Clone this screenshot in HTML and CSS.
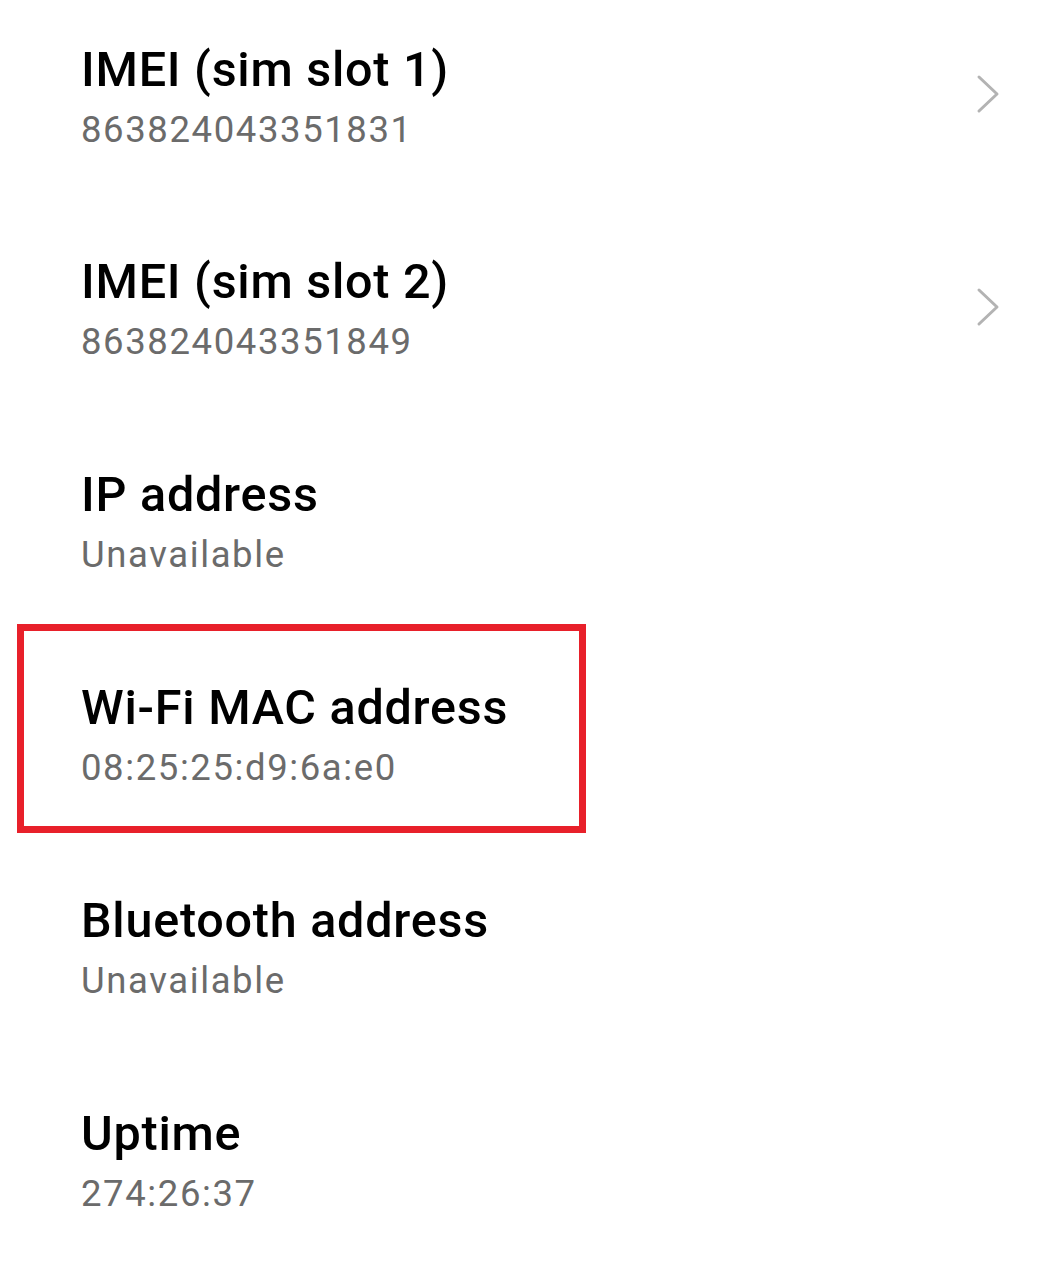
FILE: index.html
```html
<!DOCTYPE html>
<html lang="en">
<head>
<meta charset="utf-8">
<title>Device status</title>
<link rel="stylesheet" href="styles.css">
</head>
<body>
<div class="list">
  <div class="row">
    <div class="text">
      <div class="title">IMEI (sim slot 1)</div>
      <div class="value">863824043351831</div>
    </div>
    <svg class="chev" viewBox="0 0 24 40" width="24" height="40"><path d="M3 3 L21 20 L3 37" /></svg>
  </div>
  <div class="row">
    <div class="text">
      <div class="title">IMEI (sim slot 2)</div>
      <div class="value">863824043351849</div>
    </div>
    <svg class="chev" viewBox="0 0 24 40" width="24" height="40"><path d="M3 3 L21 20 L3 37" /></svg>
  </div>
  <div class="row">
    <div class="text">
      <div class="title">IP address</div>
      <div class="value">Unavailable</div>
    </div>
  </div>
  <div class="row highlighted">
    <div class="text">
      <div class="title">Wi-Fi MAC address</div>
      <div class="value">08:25:25:d9:6a:e0</div>
    </div>
    <div class="mark"></div>
  </div>
  <div class="row">
    <div class="text">
      <div class="title">Bluetooth address</div>
      <div class="value">Unavailable</div>
    </div>
  </div>
  <div class="row">
    <div class="text">
      <div class="title">Uptime</div>
      <div class="value">274:26:37</div>
    </div>
  </div>
</div>
</body>
</html>
```

FILE: styles.css
```css
html, body {
  margin: 0;
  padding: 0;
  background: #ffffff;
}
body {
  font-family: Roboto, "Noto Sans", "Liberation Sans", sans-serif;
  overflow: hidden;
}
.list {
  display: flex;
  flex-direction: column;
}
.row {
  position: relative;
  box-sizing: border-box;
  height: 212.8px;
  padding: 41.6px 60px 0 81px;
  display: flex;
  align-items: flex-start;
  justify-content: space-between;
}
.text {
  display: flex;
  flex-direction: column;
  gap: 10px;
}
.title {
  font-size: 48.5px;
  line-height: 56px;
  font-weight: 500;
  color: #000000;
  letter-spacing: 0.75px;
}
.value {
  font-size: 36.5px;
  line-height: 44px;
  font-weight: 400;
  color: #6b6b6b;
  letter-spacing: 1.6px;
}
.chev {
  margin-top: 32.4px;
}
.chev path {
  fill: none;
  stroke: #b3b3b3;
  stroke-width: 3;
  stroke-linecap: round;
  stroke-linejoin: round;
}
.mark {
  position: absolute;
  left: 17px;
  top: -14.4px;
  width: 569px;
  height: 209px;
  box-sizing: border-box;
  border: 7px solid #e8202a;
}
```
